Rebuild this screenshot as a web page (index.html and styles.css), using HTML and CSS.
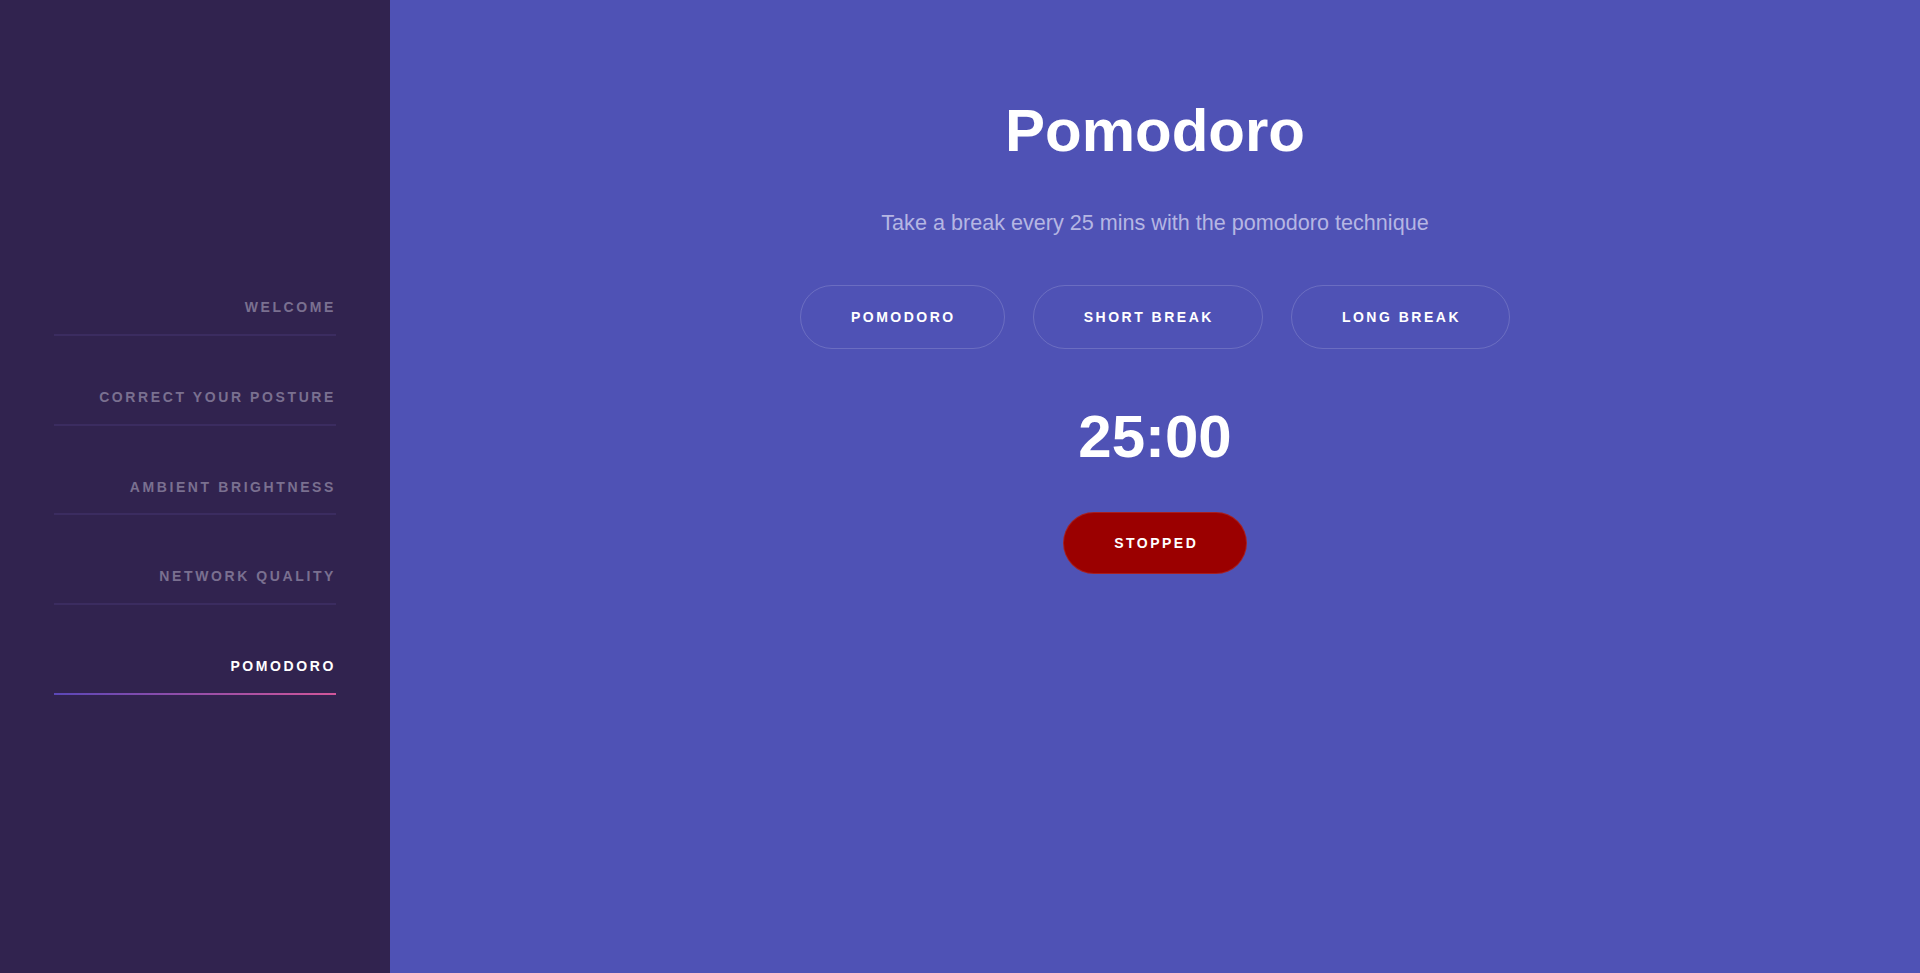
FILE: index.html
```html
<!DOCTYPE html>
<html lang="en">
<head>
<meta charset="utf-8">
<title>Pomodoro</title>
<link rel="stylesheet" href="styles.css">
</head>
<body>
<div class="app">
  <aside class="sidebar">
    <nav class="nav">
      <a class="nav-item" href="#">Welcome</a>
      <a class="nav-item" href="#">Correct your posture</a>
      <a class="nav-item" href="#">Ambient brightness</a>
      <a class="nav-item" href="#">Network quality</a>
      <a class="nav-item active" href="#">Pomodoro</a>
    </nav>
  </aside>
  <main class="main">
    <h1 class="title">Pomodoro</h1>
    <p class="subtitle">Take a break every 25 mins with the pomodoro technique</p>
    <div class="modes">
      <button class="mode">Pomodoro</button>
      <button class="mode">Short break</button>
      <button class="mode">Long break</button>
    </div>
    <div class="timer">25:00</div>
    <button class="status">Stopped</button>
  </main>
</div>
</body>
</html>
```

FILE: styles.css
```css
* { box-sizing: border-box; }
html, body { margin: 0; padding: 0; height: 100%; }
body {
  font-family: "Liberation Sans", Arial, sans-serif;
  background: #4f52b5;
  color: #fff;
}
.app {
  display: flex;
  height: 973px;
}
.sidebar {
  width: 390px;
  flex: 0 0 390px;
  background: #31234f;
  padding: 246px 54px 0 54px;
}
.nav {
  display: flex;
  flex-direction: column;
}
.nav-item {
  display: block;
  text-align: right;
  text-decoration: none;
  text-transform: uppercase;
  font-size: 14px;
  font-weight: 700;
  letter-spacing: 2.6px;
  line-height: 16px;
  color: #7a7090;
  padding: 53px 0 18.75px;
  border-bottom: 2px solid #3b2c60;
}
.nav-item.active {
  color: #fff;
  border-bottom: none;
  padding-bottom: 20.75px;
  background: linear-gradient(90deg, #5b47b8, #d2569a) no-repeat left bottom / 100% 2px;
}
.main {
  flex: 1;
  display: flex;
  flex-direction: column;
  align-items: center;
  padding-top: 96px;
}
.title {
  margin: 0;
  font-size: 60px;
  line-height: 70px;
  font-weight: 700;
}
.subtitle {
  margin: 41.5px 0 0;
  font-size: 21.6px;
  line-height: 30px;
  color: #b5b6e3;
}
.modes {
  display: flex;
  gap: 28px;
  margin-top: 47.5px;
}
.mode, .status {
  font-family: "Liberation Sans", Arial, sans-serif;
  font-size: 14px;
  font-weight: 700;
  letter-spacing: 2.5px;
  text-transform: uppercase;
  color: #fff;
  line-height: 16px;
  border-radius: 40px;
  cursor: pointer;
}
.mode {
  height: 64px;
  padding: 0 48px 0 50px;
  background: transparent;
  border: 1px solid rgba(255, 255, 255, 0.16);
}
.timer {
  margin-top: 53px;
  font-size: 60px;
  line-height: 70px;
  font-weight: 700;
}
.status {
  margin-top: 40px;
  height: 62px;
  width: 184px;
  padding: 0 0 0 2.5px;
  background: #9b0000;
  border: 1px solid rgba(255, 255, 255, 0.12);
}
```
